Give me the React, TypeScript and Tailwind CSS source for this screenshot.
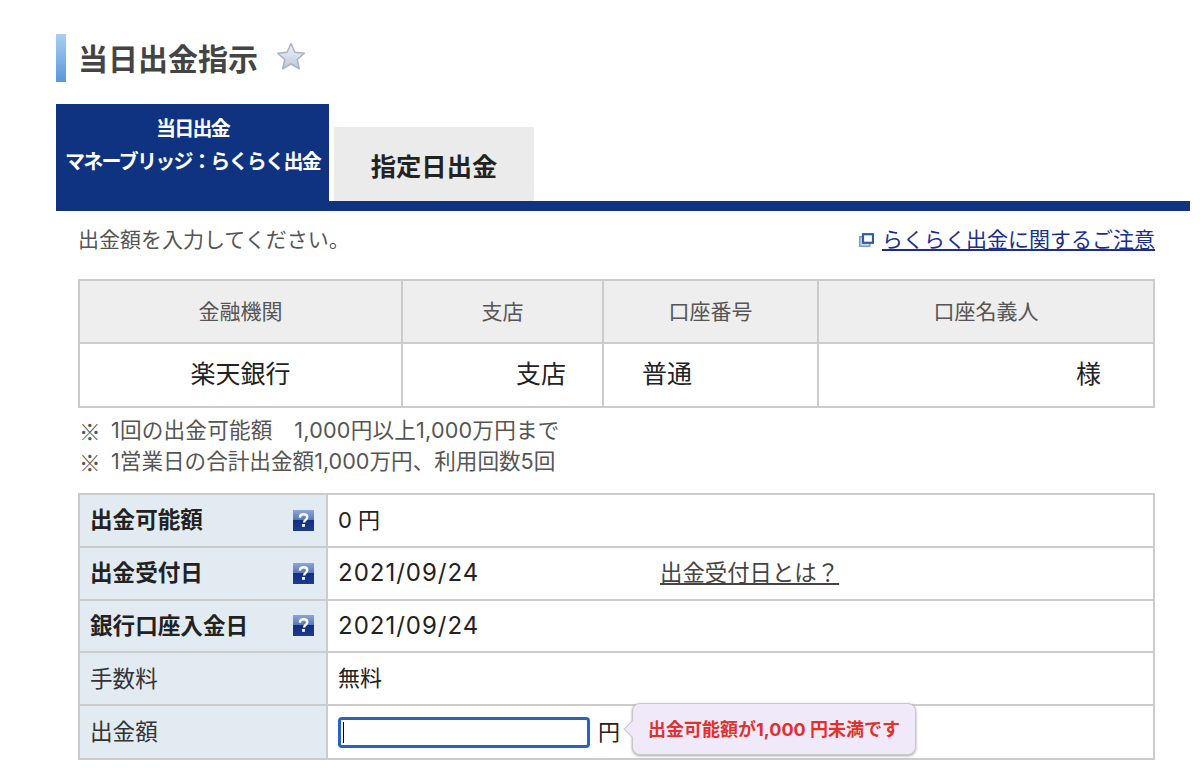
import { useState } from "react";

const font = "font-['Inter','Noto_Sans_CJK_JP',sans-serif]";

function HelpIcon() {
  return (
    <svg width="21" height="21" viewBox="0 0 21 21" className="shrink-0">
      <defs>
        <linearGradient id="helpBg" x1="0" y1="0" x2="0" y2="1">
          <stop offset="0" stopColor="#8ba6d8" />
          <stop offset="0.5" stopColor="#5574b8" />
          <stop offset="0.5" stopColor="#12307f" />
          <stop offset="1" stopColor="#1c3b8c" />
        </linearGradient>
      </defs>
      <rect width="21" height="21" fill="url(#helpBg)" />
      <path d="M6.8 7.6c.2-2.3 1.700-3.300 3.800-3.300 2.200 0 3.700 1.200 3.700 3 0 1.400-.8 2.100-1.800 2.800-.9.6-1.300 1.100-1.300 2.300" fill="none" stroke="#fff" strokeWidth="2.400" />
      <rect x="9.100" y="14" width="2.800" height="2.800" fill="#fff" />
    </svg>
  );
}

function StarIcon() {
  return (
    <svg width="30" height="30" viewBox="0 0 30 30">
      <defs>
        <linearGradient id="starBg" x1="0" y1="0" x2="0" y2="1">
          <stop offset="0" stopColor="#f2f5f9" />
          <stop offset="1" stopColor="#b9c8da" />
        </linearGradient>
      </defs>
      <path
        d="M15 1.500l3.900 8.700 9.400 1-7 6.300 2 9.300-8.300-4.800-8.300 4.800 2-9.300-7-6.300 9.400-1z"
        fill="url(#starBg)"
        stroke="#a9b3bf"
        strokeWidth="1.500"
        strokeLinejoin="round"
      />
    </svg>
  );
}

function ExternalIcon() {
  return (
    <svg width="15" height="14" viewBox="0 0 15 14" className="shrink-0">
      <rect x="0.800" y="3.800" width="10" height="9.400" fill="#cfdcee" stroke="#7f9fcb" strokeWidth="1.600" />
      <rect x="4" y="1.200" width="10" height="8.600" fill="#fff" stroke="#2b5ea6" strokeWidth="2.200" />
    </svg>
  );
}

const accountCols = "grid grid-cols-[323px_201px_215px_1fr]";

function InfoRow({
  label,
  bold,
  help,
  last,
  children,
}: {
  label: string;
  bold?: boolean;
  help?: boolean;
  last?: boolean;
  children: React.ReactNode;
}) {
  return (
    <div className={`flex ${last ? "h-[52px]" : "h-[52.8px] border-b-2 border-[#cccccc]"}`}>
      <div className="flex w-[248px] shrink-0 items-center justify-between border-r-2 border-[#cccccc] bg-[#e3ebf2] pl-[10px] pr-[12px]">
        <span className={`text-[22.6px] ${bold ? "font-bold text-[#222]" : "text-[#333]"}`}>{label}</span>
        {help && <HelpIcon />}
      </div>
      <div className="flex min-w-0 flex-1 items-center pl-[10px] text-[22px] text-[#222]">{children}</div>
    </div>
  );
}

export default function App() {
  const [amount, setAmount] = useState("");

  return (
    <div className={`${font} h-[773px] w-[1200px] overflow-hidden bg-white pl-[56px] pr-[10px] pt-[34px]`}>
      <div className="flex h-[48px] items-center">
        <div className="h-full w-[10px] bg-gradient-to-b from-[#a9cff2] to-[#5a97d6]" />
        <h1 className="ml-[12px] text-[30px] font-bold leading-[48px] text-[#444] translate-y-[1px]">当日出金指示</h1>
        <div className="ml-[18px] -mt-[2px]">
          <StarIcon />
        </div>
      </div>

      <div className="mt-[22px] flex h-[97px] items-end gap-[5px]">
        <div className="flex h-[97px] w-[273px] flex-col items-center bg-[#0f3381] pt-[9px] text-[20px] font-bold leading-[33px] tracking-[-1.700px] text-white">
          <span>当日出金</span>
          <span className="whitespace-nowrap">マネーブリッジ：らくらく出金</span>
        </div>
        <div className="flex h-[74px] w-[200px] items-center justify-center bg-[#ebebeb] pt-[5px] text-[25.300px] font-bold text-[#222]">
          指定日出金
        </div>
      </div>
      <div className="h-[10px] bg-[#0f3381]" />

      <div className="pl-[22px] pr-[35px]">
        <div className="flex h-[59px] items-start justify-between pt-[13px]">
          <p className="text-[21px] leading-[32px] text-[#555]">出金額を入力してください。</p>
          <a href="#" className="flex items-center gap-[8px] text-[21px] leading-[32px] text-[#1a2f8c] underline">
            <ExternalIcon />
            らくらく出金に関するご注意
          </a>
        </div>

        <div className="mt-[9px] border-2 border-[#cccccc] text-center">
          <div className={`${accountCols} h-[63px] border-b-2 border-[#cccccc] bg-[#eeeeee] text-[21px] text-[#555]`}>
            <div className="flex items-center justify-center border-r-2 border-[#cccccc]">金融機関</div>
            <div className="flex items-center justify-center border-r-2 border-[#cccccc]">支店</div>
            <div className="flex items-center justify-center border-r-2 border-[#cccccc]">口座番号</div>
            <div className="flex items-center justify-center">口座名義人</div>
          </div>
          <div className={`${accountCols} h-[62px] text-[25px] text-[#222]`}>
            <div className="flex items-center justify-center border-r-2 border-[#cccccc]">楽天銀行</div>
            <div className="flex items-center justify-end border-r-2 border-[#cccccc] pr-[36px]">支店</div>
            <div className="flex items-center border-r-2 border-[#cccccc] pl-[38px]">普通</div>
            <div className="flex items-center justify-end pr-[52px]">様</div>
          </div>
        </div>

        <div className="mt-[7px] text-[21.600px] leading-[31px] text-[#555]">
          <p className="flex tracking-[0.2px]">
            <span className="w-[33px] pl-[1px] font-['Noto_Sans_CJK_JP',sans-serif]">※</span>
            1回の出金可能額　1,000円以上1,000万円まで
          </p>
          <p className="flex">
            <span className="w-[33px] pl-[1px] font-['Noto_Sans_CJK_JP',sans-serif]">※</span>
            1営業日の合計出金額1,000万円、利用回数5回
          </p>
        </div>

        <div className="mt-[16px] border-2 border-[#cccccc]">
          <InfoRow label="出金可能額" bold help>
            0 円
          </InfoRow>
          <InfoRow label="出金受付日" bold help>
            <span className="w-[322px] text-[24px] tracking-[1px]">2021/09/24</span>
            <a href="#" className="text-[22.400px] text-[#444] underline">
              出金受付日とは？
            </a>
          </InfoRow>
          <InfoRow label="銀行口座入金日" bold help>
            <span className="text-[24px] tracking-[1px]">2021/09/24</span>
          </InfoRow>
          <InfoRow label="手数料">無料</InfoRow>
          <InfoRow label="出金額" last>
            <div className="relative">
              <input
                value={amount}
                onChange={(e) => setAmount(e.target.value)}
                className="block h-[31px] w-[252px] rounded-[4px] border-[3px] border-[#2565c0] bg-white outline-none"
              />
              <span className="absolute left-[5px] top-[5px] h-[21px] w-[1px] bg-black" />
            </div>
            <span className="ml-[8px]">円</span>
            <div className="relative ml-[12px] -mt-[6px] flex h-[52px] w-[284px] items-center justify-center rounded-[8px] border border-[#c9c9c9] bg-[#f0e9f9] text-[18px] font-bold text-[#e2302d] shadow-[0_1px_3px_rgba(0,0,0,0.35)]">
              <span className="absolute left-[-7px] top-[19px] h-[12px] w-[12px] rotate-45 border-b border-l border-[#c9c9c9] bg-[#f0e9f9]" />
              出金可能額が1,000 円未満です
            </div>
          </InfoRow>
        </div>
      </div>
    </div>
  );
}
